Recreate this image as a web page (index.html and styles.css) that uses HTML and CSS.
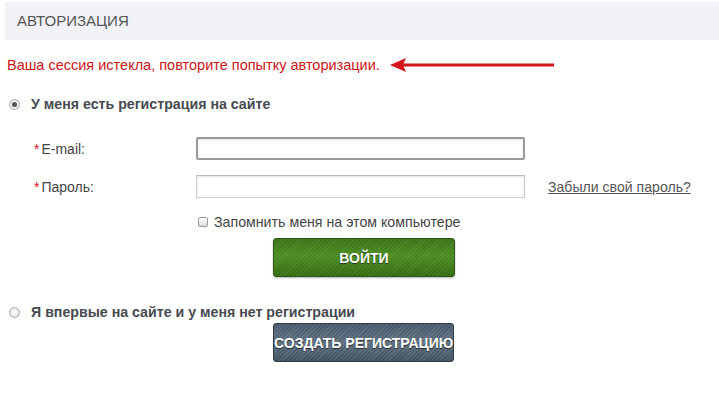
FILE: index.html
```html
<!DOCTYPE html>
<html>
<head>
    <title>Авторизация</title>
    <link rel="stylesheet" href="styles.css">
</head>
<body>
    <div class="page-title">АВТОРИЗАЦИЯ</div>

    <div class="error-line">
        <span class="error-text">Ваша сессия истекла, повторите попытку авторизации.</span>
        <svg class="arrow" width="166" height="16" viewBox="0 0 166 16">
            <line x1="12" y1="8" x2="164" y2="8" stroke="#d4151b" stroke-width="3"/>
            <polygon points="0,8 16,1 13,8 16,15" fill="#d4151b"/>
        </svg>
    </div>

    <div class="choice">
        <span class="radio checked"></span>
        <span class="choice-label">У меня есть регистрация на сайте</span>
    </div>

    <div class="form-row">
        <label class="field-label"><span class="req">*</span>E-mail:</label>
        <input class="field focused" type="text">
    </div>
    <div class="form-row">
        <label class="field-label"><span class="req">*</span>Пароль:</label>
        <input class="field" type="password">
        <a class="forgot" href="#">Забыли свой пароль?</a>
    </div>

    <div class="remember">
        <span class="checkbox"></span>
        <span>Запомнить меня на этом компьютере</span>
    </div>

    <div class="btn-row">
        <button class="btn btn-green">ВОЙТИ</button>
    </div>

    <div class="choice second">
        <span class="radio"></span>
        <span class="choice-label">Я впервые на сайте и у меня нет регистрации</span>
    </div>

    <div class="btn-row">
        <button class="btn btn-gray">СОЗДАТЬ РЕГИСТРАЦИЮ</button>
    </div>
</body>
</html>
```

FILE: styles.css
```css
body {
    margin: 0;
    padding: 2px 0 0 0;
    font-family: "Liberation Sans", Arial, sans-serif;
    font-size: 14px;
    color: #444;
    background: #fff;
}
.page-title {
    margin-left: 5px;
    height: 38px;
    line-height: 38px;
    padding-left: 12px;
    background-color: #f1f2f6;
    color: #555;
    font-size: 15px;
}
.error-line {
    display: flex;
    align-items: center;
    height: 22px;
    margin-top: 14px;
    padding-left: 7px;
}
.error-text {
    color: #cc1517;
    font-size: 14.5px;
}
.arrow {
    margin-left: 10px;
}
.choice {
    display: flex;
    align-items: center;
    margin-top: 19px;
    padding-left: 9px;
    height: 18px;
}
.choice.second {
    margin-top: 26px;
}
.radio {
    width: 9px;
    height: 9px;
    border: 1px solid #aaa;
    border-radius: 50%;
    background: radial-gradient(circle, #fff 0%, #ddd 100%);
    margin-right: 11px;
    position: relative;
}
.radio.checked::after {
    content: "";
    position: absolute;
    left: 2px;
    top: 2px;
    width: 5px;
    height: 5px;
    border-radius: 50%;
    background: #555;
}
.choice-label {
    font-weight: bold;
    font-size: 14.2px;
    color: #464a50;
}
.form-row {
    display: grid;
    grid-template-columns: 196px 329px auto;
    align-items: center;
    height: 23px;
}
.choice + .form-row {
    margin-top: 24px;
}
.form-row + .form-row {
    margin-top: 15px;
}
.field-label {
    padding-left: 34px;
    font-size: 14px;
    color: #444;
}
.req {
    color: #d4151b;
    margin-right: 2px;
}
.field {
    box-sizing: border-box;
    width: 329px;
    height: 23px;
    margin: 0;
    border: 1px solid #ccc;
    border-top-color: #bbb;
    box-shadow: inset 0 1px 2px rgba(0,0,0,0.12);
    background: #fff;
    outline: none;
}
.field.focused {
    border: 2px solid #9a9a9a;
    border-radius: 2px;
}
.forgot {
    margin-left: 23px;
    color: #555;
    font-size: 14.1px;
}
.remember {
    display: flex;
    align-items: center;
    margin-top: 15px;
    padding-left: 198px;
    font-size: 14.2px;
    color: #444;
    height: 18px;
}
.checkbox {
    width: 8px;
    height: 8px;
    border: 1px solid #999;
    border-radius: 2px;
    background: linear-gradient(#fff, #ddd);
    margin-right: 6px;
}
.btn-row {
    padding-left: 273px;
}
.btn {
    width: 182px;
    height: 39px;
    border-radius: 3px;
    color: #fff;
    font-family: "Liberation Sans", Arial, sans-serif;
    font-weight: bold;
    font-size: 14px;
    text-shadow: 0 1px 1px rgba(0,0,0,0.6);
    cursor: pointer;
    padding: 0;
    white-space: nowrap;
}
.btn-green {
    margin-top: 7px;
    border: 1px solid #2e5614;
    background:
        repeating-linear-gradient(-45deg, rgba(255,255,255,0.08) 0 1px, rgba(0,0,0,0) 1px 3px),
        linear-gradient(#3a7318, #4b8c20 45%, #356c13);
    box-shadow: 0 1px 2px rgba(0,0,0,0.3);
}
.btn-gray {
    margin-top: 2px;
    width: 181px;
    border: 1px solid #2f3a44;
    background:
        repeating-linear-gradient(-45deg, rgba(255,255,255,0.1) 0 1px, rgba(0,0,0,0) 1px 3px),
        linear-gradient(#46586a, #5e6f80 50%, #3f505f);
    font-size: 14px;
}
```
